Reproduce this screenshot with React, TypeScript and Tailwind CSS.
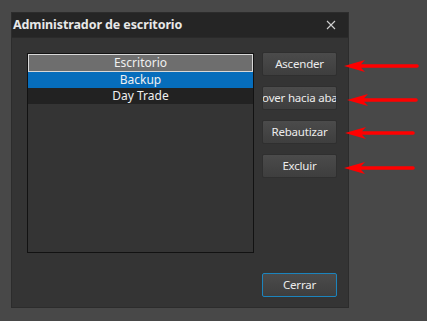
import React from 'react';

const items = [
  { label: 'Escritorio', kind: 'focused' },
  { label: 'Backup', kind: 'selected' },
  { label: 'Day Trade', kind: 'normal' },
];

const actions = ['Ascender', 'Mover hacia abajo', 'Rebautizar', 'Excluir'];

// red annotation arrows, [tipX, y, tailX]
const arrows: [number, number, number][] = [
  [344, 66, 417],
  [347, 100, 416],
  [345, 133, 413],
  [344, 168, 413],
];

const Button = ({ label, primary }: { label: string; primary?: boolean }) => (
  <button
    className={`flex h-[24px] w-[75px] items-center justify-center overflow-hidden whitespace-nowrap rounded-[2px] bg-gradient-to-b from-[#4b4b4b] to-[#3e3e3e] text-[11.5px] tracking-[-0.2px] text-[#ececec] ${
      primary ? 'border border-[#1c84bd]' : 'border border-[#2f2f2f]'
    }`}
  >
    {label}
  </button>
);

const Arrow = ({ tip, y, tail }: { tip: number; y: number; tail: number }) => (
  <path
    d={`M${tip},${y} L${tip + 21},${y - 6} L${tip + 17},${y - 1.8} L${tail},${y - 1.8} A1.8,1.8 0 0 1 ${tail},${y + 1.8} L${tip + 17},${y + 1.8} L${tip + 21},${y + 6} Z`}
    fill="#ff0000"
  />
);

export default function App() {
  return (
    <div className="relative h-[321px] w-[427px] overflow-hidden bg-[#484848] pl-[11px] pt-[12px] font-['Noto_Sans',sans-serif]">
      <div className="flex h-[296px] w-[338px] flex-col border border-[#2c2c2c] bg-[#343434]">
        {/* title bar */}
        <div className="flex h-[25px] items-center justify-between border-b border-[#2a2a2a] bg-[#252525] pl-[1px] pr-[12px]">
          <span className="text-[12.5px] font-bold tracking-[-0.1px] text-[#e8e8e8]">Administrador de escritorio</span>
          <svg width="10" height="10" viewBox="0 0 10 10">
            <path d="M1 1 L9 9 M9 1 L1 9" stroke="#d0d0d0" strokeWidth="1.1" />
          </svg>
        </div>

        <div className="flex flex-1 flex-col pl-[15px] pr-[11px] pt-[14px] pb-[10px]">
          <div className="flex gap-[8px]">
            {/* desktop list */}
            <div className="mt-[1px] flex h-[200px] w-[227px] flex-col border border-[#121212] bg-[#343434]">
              {items.map((it) => (
                <div
                  key={it.label}
                  className={`flex items-center justify-center text-[12px] text-[#f0f0f0] ${
                    it.kind === 'focused'
                      ? 'h-[18px] border border-[#d8d8d8] bg-[#6e6e6e]'
                      : it.kind === 'selected'
                      ? 'h-[16px] bg-[#066dbc]'
                      : 'h-[16px] bg-[#222222]'
                  }`}
                >
                  {it.label}
                </div>
              ))}
            </div>

            <div className="flex flex-col gap-[10px]">
              {actions.map((a) => (
                <Button key={a} label={a} />
              ))}
            </div>
          </div>

          <div className="mt-auto flex justify-end">
            <Button label="Cerrar" primary />
          </div>
        </div>
      </div>

      <svg className="absolute left-0 top-0" width="427" height="321">
        {arrows.map(([tip, y, tail]) => (
          <Arrow key={y} tip={tip} y={y} tail={tail} />
        ))}
      </svg>
    </div>
  );
}
